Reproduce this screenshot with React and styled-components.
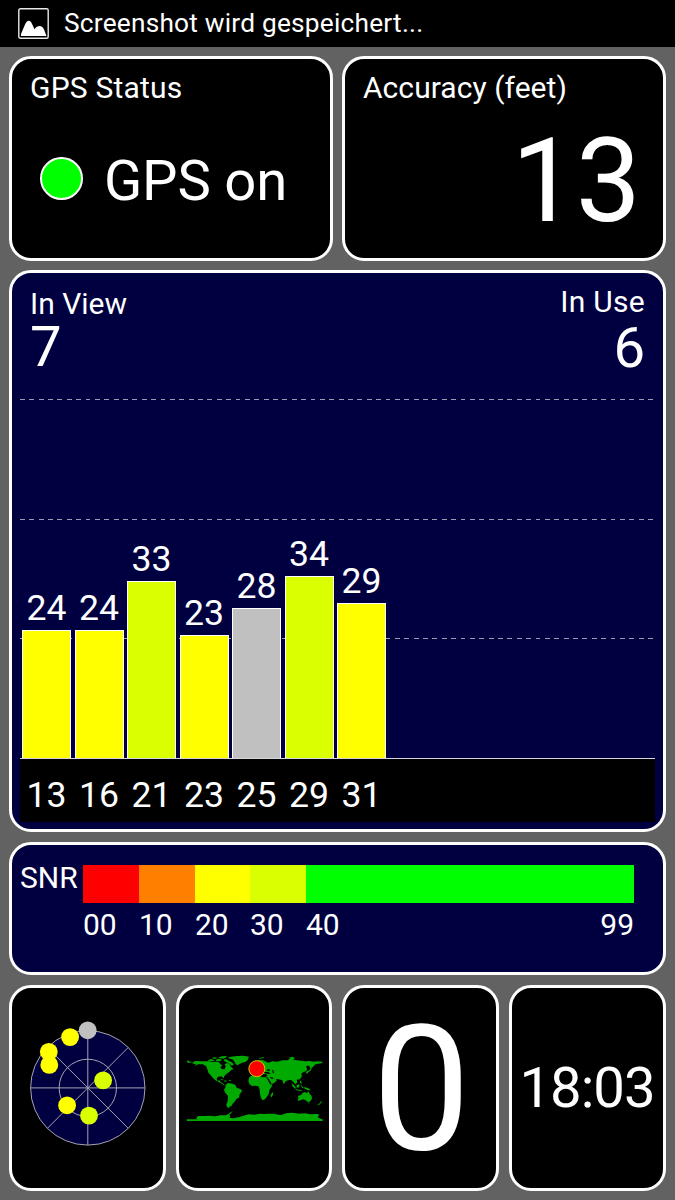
import React from 'react'
import styled, { createGlobalStyle } from 'styled-components'

const GlobalStyle = createGlobalStyle`
    body {
        margin: 0;
        background: #626262;
        color: #fff;
        font-family: Roboto, sans-serif;
    }
`

const Screen = styled.div`
    width: 675px;
    height: 1200px;
    overflow: hidden;
    background: #626262;
`

const StatusBar = styled.header`
    display: flex;
    align-items: center;
    gap: 15px;
    height: 47px;
    padding-left: 18px;
    background: #000;
`

const Text = styled.div`
    font-size: ${(props) => props.$size || 30}px;
    line-height: ${(props) => props.$line || props.$size || 30}px;
    letter-spacing: ${(props) => props.$spacing || 0}px;
    white-space: nowrap;
`

const Panels = styled.main`
    display: flex;
    flex-direction: column;
    padding: 9px 9px 9px;
`

const Row = styled.div`
    display: grid;
    grid-template-columns: ${(props) => props.$columns};
    column-gap: ${(props) => props.$gap}px;
`

const Card = styled.section`
    box-sizing: border-box;
    height: ${(props) => props.$height}px;
    border: 3px solid #fff;
    border-radius: 22px;
    background: ${(props) => (props.$blue ? '#000040' : '#000')};
`

const StatusCard = styled(Card)`
    padding: 14px 23px 0 18px;
`

const GpsState = styled.div`
    display: flex;
    align-items: flex-start;
    gap: 21px;
    margin: 50px 0 0 10px;
`

const Led = styled.span`
    box-sizing: border-box;
    width: 43px;
    height: 43px;
    margin-top: 4px;
    border: 2px solid #fff;
    border-radius: 50%;
    background: #00ff00;
`

const Accuracy = styled(Text)`
    margin: 20px 0 0;
    text-align: right;
`

const ChartCard = styled(Card)`
    margin-top: 9px;
    padding: 0 8px;
`

const ChartHeader = styled.div`
    display: flex;
    justify-content: space-between;
    height: 111px;
    padding: 14px 10px 0;
`

const Counter = styled.div`
    text-align: ${(props) => props.$align || 'left'};
    padding-top: ${(props) => props.$top || 0}px;
`

const Plot = styled.div`
    display: grid;
    height: 360px;
    border-bottom: 1px solid #d4d4da;

    > * {
        grid-area: 1 / 1;
    }
`

const GridLines = styled.div`
    display: grid;
    grid-template-rows: 120px 119px 120px;
    padding-top: 1px;
`

const GridLine = styled.div`
    height: 1px;
    background: repeating-linear-gradient(90deg, #9c9cb0 0 4.8px, transparent 4.8px 9.375px);
`

const Bars = styled.div`
    display: flex;
    align-items: flex-end;
    gap: 3.5px;
    padding-left: 2px;
`

const BarColumn = styled.div`
    width: 49px;
    text-align: center;
`

const Bar = styled.div`
    box-sizing: border-box;
    margin-top: 3px;
    border: 1px solid #fff;
    border-bottom: 0;
    background: ${(props) => props.$color};
`

const Axis = styled.div`
    display: flex;
    align-items: center;
    gap: 3.5px;
    height: 63px;
    padding-left: 2px;
    background: #000;
`

const Tick = styled(Text)`
    width: 49px;
    padding-top: 10px;
    text-align: center;
`

const SnrCard = styled(Card)`
    display: flex;
    gap: 6px;
    margin-top: 10px;
    padding: 18px 0 0 8px;
`

const SnrLabel = styled(Text)`
    width: 57px;
`

const Legend = styled.div`
    display: grid;
    grid-template-columns: 56px 56px 55px 56px 328px;
    grid-template-rows: 38px 42px;
    padding-top: 2px;
`

const Swatch = styled.div`
    background: ${(props) => props.$color};
`

const LegendLabel = styled.div`
    display: flex;
    justify-content: space-between;
    padding-top: 7px;
`

const Tile = styled(Card)`
    display: flex;
    align-items: center;
    justify-content: center;
`

const BottomRow = styled(Row)`
    margin-top: 10px;
`

const Speed = styled(Text)`
    padding: 3px 0 0 2px;
`

const Clock = styled(Text)`
    width: 132px;
    margin-right: 4px;
    overflow: hidden;
`

const YELLOW = '#ffff00'
const LIME = '#d9ff00'
const GREY = '#c0c0c0'

const satellites = [
    { id: 13, snr: 24, color: YELLOW },
    { id: 16, snr: 24, color: YELLOW },
    { id: 21, snr: 33, color: LIME },
    { id: 23, snr: 23, color: YELLOW },
    { id: 25, snr: 28, color: GREY },
    { id: 29, snr: 34, color: LIME },
    { id: 31, snr: 29, color: YELLOW },
]

const legend = [
    { label: '00', color: '#ff0000' },
    { label: '10', color: '#ff8000' },
    { label: '20', color: YELLOW },
    { label: '30', color: LIME },
    { label: '40', color: '#00ff00', end: '99' },
]

const skyDots = [
    { x: 70, y: 37, color: YELLOW },
    { x: 48.7, y: 51.7, color: YELLOW },
    { x: 49.2, y: 64.8, color: YELLOW },
    { x: 87.6, y: 30.2, color: GREY },
    { x: 103, y: 80.3, color: LIME },
    { x: 67, y: 105.2, color: YELLOW },
    { x: 88.9, y: 115.5, color: LIME },
]

const barHeight = (snr) => Math.floor(snr * 5.365)

const PictureIcon = () => (
    <svg width="31" height="31" viewBox="0 0 31 31">
        <rect x="0.8" y="0.8" width="29.4" height="29.4" rx="1.5" fill="none" stroke="#e8e8e8" strokeWidth="1.4" />
        <path d="M3 28V26L7 16.5C8 14.2 9.3 12.8 10.8 12.8C12.5 12.8 13.3 14.5 14.3 16.6L16.5 21.3C17.8 18.9 20 18.1 21.8 18.1C24.5 18.1 25.6 20.3 26.6 23L28.5 28Z" fill="#fff" />
    </svg>
)

const SkyView = () => (
    <svg width="120" height="120" viewBox="27.9 27.9 120 120" overflow="visible">
        <g stroke="#a4a4b0" strokeWidth="1">
            <circle cx="87.7" cy="87.8" r="57.2" fill="#000040" />
            <circle cx="87.7" cy="87.8" r="28.7" fill="none" />
            <path d="M30.5 87.8H144.9M87.7 30.6V145M47.3 47.4L128.1 128.2M47.3 128.2L128.1 47.4" />
        </g>
        {skyDots.map((dot) => (
            <circle key={`${dot.x}-${dot.y}`} cx={dot.x} cy={dot.y} r="8.9" fill={dot.color} />
        ))}
    </svg>
)

const WorldMap = () => (
    <svg width="137" height="66" viewBox="30 75 411 198">
        <g fill="#00aa00">
            {/* americas */}
            <path d="M32 92H40V95H46V98H34ZM50 97L58 93L74 94L98 94L108 96L122 95L134 98L140 106L133 112L137 117L146 118L149 109L146 103L153 99L160 102L165 110L173 117L166 120L160 126L152 131L145 138L143 145L136 139L127 140L122 145L124 152L131 151L133 155L140 160L147 166L143 165L135 160L127 155L118 151L110 143L106 138L97 128L94 118L90 108L80 103L66 103L56 108L60 102L50 101Z" />
            <path d="M96 91L106 87L116 91L110 94L98 94ZM118 90L128 86L138 89L132 94L122 94ZM107 84L116 82L124 84L116 87ZM127 82L139 79L152 78L151 82L142 86L132 85ZM143 89L151 87L157 92L166 96L174 103L168 107L160 101L152 97L145 94Z" />
            <path d="M155 83L165 80L184 78L202 77L219 80L217 84L215 91L208 96L198 98L189 103L185 106L179 103L176 96L170 88L162 86Z" />
            <path d="M134 147L143 149L140 151L134 149ZM145 151L153 153L150 155L144 154ZM158 151L165 151V153H158Z" />
            <path d="M149 164L156 159L170 161L178 165L182 173L193 177L198 181L196 187L191 193L189 203L181 207L177 214L171 220L167 227L159 231L161 235L153 231L151 224L155 213L156 197L148 189L144 179L148 173Z" />
            {/* europe, africa and asia */}
            <path d="M228 132L225 123L234 121L232 113L224 108L231 105L239 98L247 91L259 90L271 95L277 98L289 94L302 95L309 94L320 91L335 91L344 85L356 90L375 92L388 94L400 93L412 95L425 94L440 95L438 99L427 101L414 104L407 110L403 115L400 108L396 107L390 109L393 116L391 124L383 125L376 131L378 139L371 148L362 149L364 158L358 163L351 155L347 151L340 150L330 153L323 163L319 151L308 148L301 147L302 152L294 159L286 163L277 145L270 139L275 136L269 132L263 133L257 128L250 132L243 129L235 132Z" />
            <path d="M220 141L229 136L240 135L250 138L260 142L271 142L276 151L282 163L289 164L286 172L280 180L279 190L274 199L267 208L260 211L255 205L252 192L251 178L247 169L237 167L228 168L220 162L217 152Z" />
            <path d="M287 190L292 186L291 194L287 202L283 198ZM222 114L228 112L230 120L222 122ZM248 84L263 82L265 84L251 86ZM339 83L349 80L357 84L352 88L342 86Z" />
            <path d="M393 124L401 120L405 111L410 105L418 102L414 108L407 114L405 121L398 126L393 131L389 129Z" />
            {/* south east asia and oceania */}
            <path d="M347 160L354 165L360 174L356 176L349 168ZM361 165L370 163L370 172L363 173ZM373 161L378 168L384 175L378 174ZM371 151L375 153L378 161L373 160ZM358 177L373 180L380 181L372 183L359 180ZM384 171L396 174L405 181L395 181L386 176Z" />
            <path d="M366 198L375 195L380 188L387 186L392 190L397 184L401 191L407 198L408 206L403 214L396 217L389 211L382 208L373 211L365 213L367 205ZM397 218L401 218L399 222ZM435 213L438 216L429 225L424 224L432 219Z" />
            {/* antarctica */}
            <path d="M32 268H65L60 265L66 258L86 258L100 257L118 259L132 256L150 256L157 252L163 247L170 244L165 250L160 254L163 259L160 263L171 265L188 262L202 257L218 253L236 254L251 251L266 252L281 251L297 252L309 254L316 255L330 250L350 248L368 251L386 250L404 253L426 252L430 255L425 260L429 265L440 268V273H32Z" />
        </g>
        <g fill="#000">
            <path d="M271 119L280 117L282 123L275 123ZM263 126L277 126L284 131L278 132L266 130ZM288 120L292 121L294 130L290 128ZM282 140L293 144L291 147L284 145ZM277 144L288 162L283 157ZM128 96L138 99L146 104L141 108L134 103Z" />
        </g>
        <circle cx="242.5" cy="116" r="24" fill="#ff0000" stroke="#d9c400" strokeWidth="3" />
    </svg>
)

const App = () => (
    <Screen>
        <GlobalStyle />
        <StatusBar>
            <PictureIcon />
            <Text $size={26.25} $spacing={0.22}>Screenshot wird gespeichert...</Text>
        </StatusBar>

        <Panels>
            <Row $columns="324px 324px" $gap={9}>
                <StatusCard $height={205}>
                    <Text $spacing={0.2}>GPS Status</Text>
                    <GpsState>
                        <Led />
                        <Text $size={56.25} $spacing={-0.2}>GPS on</Text>
                    </GpsState>
                </StatusCard>
                <StatusCard $height={205}>
                    <Text $spacing={0.05}>Accuracy (feet)</Text>
                    <Accuracy $size={116} $spacing={-1}>13</Accuracy>
                </StatusCard>
            </Row>

            <ChartCard $blue $height={562}>
                <ChartHeader>
                    <Counter $top={2}>
                        <Text>In View</Text>
                        <Text $size={56.25} $line={57}>7</Text>
                    </Counter>
                    <Counter $align="right">
                        <Text $spacing={0.3}>In Use</Text>
                        <Text $size={56.25} $line={62}>6</Text>
                    </Counter>
                </ChartHeader>
                <Plot>
                    <GridLines>
                        <GridLine />
                        <GridLine />
                        <GridLine />
                    </GridLines>
                    <Bars>
                        {satellites.map((sat) => (
                            <BarColumn key={sat.id}>
                                <Text $size={35.6}>{sat.snr}</Text>
                                <Bar $color={sat.color} style={{ height: barHeight(sat.snr) }} />
                            </BarColumn>
                        ))}
                    </Bars>
                </Plot>
                <Axis>
                    {satellites.map((sat) => (
                        <Tick key={sat.id} $size={35.6}>{sat.id}</Tick>
                    ))}
                </Axis>
            </ChartCard>

            <SnrCard $blue $height={133}>
                <SnrLabel>SNR</SnrLabel>
                <Legend>
                    {legend.map((item) => (
                        <Swatch key={item.label} $color={item.color} />
                    ))}
                    {legend.map((item) => (
                        <LegendLabel key={item.label}>
                            <Text>{item.label}</Text>
                            {item.end && <Text>{item.end}</Text>}
                        </LegendLabel>
                    ))}
                </Legend>
            </SnrCard>

            <BottomRow $columns="157px 156px 157px 157px" $gap={10}>
                <Tile $height={206}>
                    <SkyView />
                </Tile>
                <Tile $height={206}>
                    <WorldMap />
                </Tile>
                <Tile $height={206}>
                    <Speed $size={175}>0</Speed>
                </Tile>
                <Tile $height={206}>
                    <Clock $size={56.25} $spacing={-1}>18:03</Clock>
                </Tile>
            </BottomRow>
        </Panels>
    </Screen>
)

export default App
